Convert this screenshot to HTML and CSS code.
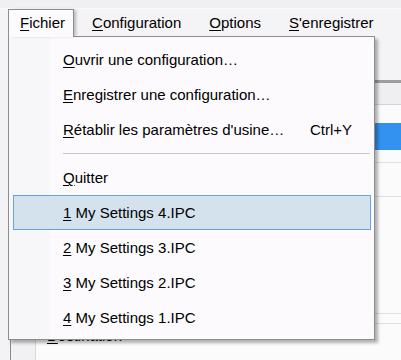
FILE: index.html
```html
<!DOCTYPE html>
<html lang="fr">
<head>
  <meta charset="UTF-8">
  <title>Configuration</title>
  <link rel="stylesheet" href="styles.css">
</head>
<body>
  <div class="window">
    <div class="title-strip"></div>

    <div class="menubar">
      <div class="menu-item open"><u>F</u>ichier</div>
      <div class="menu-item first-closed"><u>C</u>onfiguration</div>
      <div class="menu-item"><u>O</u>ptions</div>
      <div class="menu-item"><u>S</u>'enregistrer</div>
    </div>

    <div class="toolbar"></div>

    <div class="listview">
      <div class="list-header"></div>
      <div class="row r18"></div>
      <div class="row selected"></div>
      <div class="row r12 lined"></div>
      <div class="row r33 lined"></div>
      <div class="row r116 lined"></div>
      <div class="row r9 lined"></div>
      <div class="row dest"><u>D</u>estination</div>
    </div>
  </div>

  <!-- Fichier dropdown, drawn over the window -->
  <div class="dropdown">
    <div class="entry"><span><u>O</u>uvrir une configuration…</span></div>
    <div class="entry"><span><u>E</u>nregistrer une configuration…</span></div>
    <div class="entry"><span><u>R</u>établir les paramètres d'usine…</span><span class="shortcut">Ctrl+Y</span></div>
    <div class="separator"></div>
    <div class="entry"><span><u>Q</u>uitter</span></div>
    <div class="entry hover"><span><u>1</u> My Settings 4.IPC</span></div>
    <div class="entry"><span><u>2</u> My Settings 3.IPC</span></div>
    <div class="entry"><span><u>3</u> My Settings 2.IPC</span></div>
    <div class="entry"><span><u>4</u> My Settings 1.IPC</span></div>
  </div>
</body>
</html>
```

FILE: styles.css
```css
body {
  margin: 0;
  width: 401px;
  height: 360px;
  overflow: hidden;
  background-color: #f3f2f4;
  font-family: 'Liberation Sans', Arial, sans-serif;
  font-size: 15px;
  color: #000;
  position: relative;
}

u {
  text-decoration-thickness: 1px;
  text-underline-offset: 2px;
}

.window {
  display: flex;
  flex-direction: column;
}

.title-strip {
  height: 8px;
  background-color: #f0eff2;
  border-bottom: 1px solid #fbfbfb;
}

.menubar {
  display: flex;
  height: 27px;
  padding-left: 8px;
  background-color: #f4f3f5;
}

.menu-item {
  padding: 0 14px;
  line-height: 27px;
  white-space: nowrap;
}

.menu-item.first-closed {
  padding-left: 18px;
}

.menu-item.open {
  position: relative;
  z-index: 3;
  box-sizing: border-box;
  height: 28px;
  padding: 0 8px 0 11px;
  line-height: 26px;
  background-color: #fcfafc;
  border: 1px solid #8d8d8d;
  border-bottom: none;
  box-shadow: 3px 0 3px -1px rgba(0, 0, 0, 0.25);
}

.toolbar {
  height: 44px;
  background-color: #f4f3f5;
}

.listview {
  margin-left: 10px;
  border-left: 1px solid #8a8a8a;
  border-top: 3px solid #9d9d9d;
  background: linear-gradient(to right, #f1f0f3 0 24px, #d9d9dc 24px 25px, #fbfbfc 25px);
}

.list-header {
  height: 21px;
  background-color: #efeef1;
  border-bottom: 1px solid #d3d3d6;
}

.row {
  box-sizing: border-box;
}

.row.lined {
  border-bottom: 1px solid #e0e0e3;
}

.r18 { height: 18px; }
.r12 { height: 13px; }
.r33 { height: 34px; }
.r116 { height: 117px; }
.r9 { height: 10px; }

.row.dest {
  height: 36px;
  padding: 2px 0 0 36px;
  line-height: 20px;
}

.row.selected {
  height: 27px;
  background-color: #3392f0;
}

.dropdown {
  position: absolute;
  left: 8px;
  top: 36px;
  z-index: 2;
  box-sizing: border-box;
  width: 367px;
  padding: 5px 0 4px;
  border: 1px solid #8d8d8d;
  background: linear-gradient(to right, #f7f6f8 0 41px, #fcfafc 41px);
  box-shadow: 3px 3px 3px rgba(0, 0, 0, 0.3);
}

.entry {
  display: flex;
  justify-content: space-between;
  height: 35px;
  line-height: 35px;
  padding: 0 22px 0 54px;
  white-space: nowrap;
}

.entry.hover {
  box-sizing: border-box;
  margin: 0 3px 0 4px;
  padding-left: 49px;
  line-height: 33px;
  background-color: #d4e2ee;
  border: 1px solid #62a4e6;
}

.separator {
  height: 1px;
  margin: 6px 4px 6px 54px;
  background-color: #c8c8cb;
}
```
